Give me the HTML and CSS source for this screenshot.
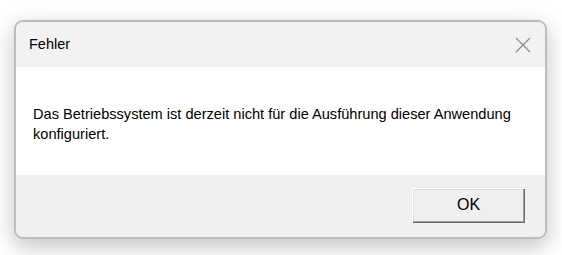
FILE: index.html
```html
<!DOCTYPE html>
<html lang="de">
<head>
<meta charset="utf-8">
<link rel="stylesheet" href="styles.css">
</head>
<body>
<div class="window">
  <div class="titlebar">
    <span class="title">Fehler</span>
    <button class="close" aria-label="Schließen">
      <svg width="16" height="16" viewBox="0 0 16 16"><path d="M1 1 L15 15 M15 1 L1 15" stroke="#8a8a8a" stroke-width="1.2" fill="none"/></svg>
    </button>
  </div>
  <div class="content">
    <p class="message">Das Betriebssystem ist derzeit nicht für die Ausführung dieser Anwendung konfiguriert.</p>
  </div>
  <div class="footer">
    <button class="ok">OK</button>
  </div>
</div>
</body>
</html>
```
FILE: styles.css
```css
html, body {
  margin: 0;
  padding: 0;
  background: #ffffff;
}
body {
  width: 562px;
  height: 255px;
  overflow: hidden;
  padding: 20px 0 0 14px;
  box-sizing: border-box;
  font-family: "Liberation Sans", Arial, sans-serif;
  color: #000;
}
.window {
  width: 533px;
  height: 219px;
  box-sizing: border-box;
  border: 2px solid #bcbcbc;
  border-radius: 9px;
  overflow: hidden;
  display: flex;
  flex-direction: column;
  box-shadow: 0 7px 22px rgba(0,0,0,0.25);
  background: #f0f0f0;
}
.titlebar {
  height: 45px;
  background: #f2f2f2;
  display: flex;
  align-items: center;
  justify-content: space-between;
  padding: 0 14px 0 13px;
}
.title {
  font-size: 14.5px;
  padding-bottom: 1px;
}
.close {
  border: 0;
  background: transparent;
  padding: 0;
  width: 16px;
  height: 16px;
  display: flex;
}
.content {
  height: 108px;
  background: #ffffff;
  padding: 0 17px;
  box-sizing: border-box;
}
.message {
  margin: 0;
  padding-top: 37px;
  font-size: 14.6px;
  line-height: 20px;
}
.footer {
  flex: 1;
  background: #f0f0f0;
  display: flex;
  justify-content: flex-end;
  align-items: flex-start;
  padding: 13px 20px 0 0;
}
.ok {
  width: 113px;
  height: 35px;
  border: 0;
  background: #efefef;
  font-family: "Liberation Sans", Arial, sans-serif;
  font-size: 16px;
  color: #000;
  box-shadow:
    inset 1px 1px 0 #ffffff,
    inset -1px -1px 0 #696969,
    inset -2px -2px 0 #a0a0a0,
    inset 2px 2px 0 #e3e3e3;
  padding: 0 0 1px 0;
}
```
